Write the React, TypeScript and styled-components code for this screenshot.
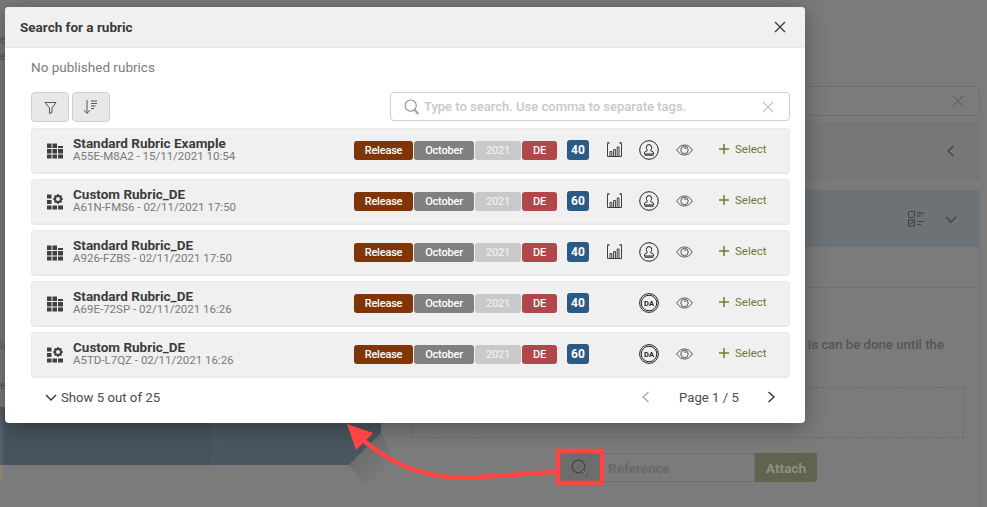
import React from "react";
import styled, { createGlobalStyle } from "styled-components";

const Global = createGlobalStyle`
  html, body { margin: 0; padding: 0; background: #7b7b7b; }
  * { box-sizing: border-box; }
  body { font-family: Roboto, "Noto Sans", "Liberation Sans", sans-serif; }
`;

const Page = styled.div`
  position: relative;
  width: 987px;
  height: 507px;
  overflow: hidden;
  background: #7b7b7b;
  display: flex;
`;

const LeftColumn = styled.div`
  width: 381px;
  flex: none;
  display: flex;
  flex-direction: column;
`;

const EdgeText = styled.div<{ $gap: number; $dark?: boolean }>`
  margin-top: ${(p) => p.$gap}px;
  height: 16px;
  font-size: 10px;
  line-height: 16px;
  flex: none;
  color: ${(p) => (p.$dark ? "#333" : "#585858")};
`;

const BandArea = styled.div`
  position: relative;
  margin-top: auto;
  height: 100px;
  flex: none;
  background:
    linear-gradient(180deg, #7d7b77 0, #7b7b7b 100%) 195px 58px / 50px 26px no-repeat,
    linear-gradient(180deg, #8a8372 0, #85806f 100%) 0 58px / 3px 16px no-repeat;

  &::before {
    content: "";
    position: absolute;
    left: 340px;
    top: 20px;
    width: 60px;
    height: 70px;
    background: linear-gradient(135deg, #636363 15%, #7b7b7b 68%);
    clip-path: polygon(41px 6px, 9px 38px, 32px 68px, 56px 34px);
  }
`;

const DarkBand = styled.div`
  position: relative;
  height: 58px;
  background: linear-gradient(90deg, #56646e 0, #47535c 1.5%, #47535c 55%, #4a5761 56%, #49565f 100%);
  clip-path: polygon(0 0, 100% 0, 100% 26px, 349px 100%, 0 100%);
`;

const RightColumn = styled.div`
  margin-left: 31px;
  width: 568px;
  flex: none;
  padding-top: 86px;
  display: flex;
  flex-direction: column;
`;

const GhostSearch = styled.div`
  height: 30px;
  border: 1px solid #6e6e6e;
  border-radius: 4px;
  display: flex;
  align-items: center;
  justify-content: flex-end;
  padding-right: 15px;
  color: #666;
`;

const GhostPanel = styled.div`
  margin-top: 6px;
  height: 58px;
  border: 1px solid #747474;
  border-radius: 4px;
  background: #777;
  display: flex;
  align-items: center;
  justify-content: flex-end;
  padding-right: 22px;
  color: #3f3f3f;
`;

const GhostCard = styled.div`
  margin-top: 10px;
  height: 317px;
  border-right: 1px solid #6a7680;
  display: flex;
  flex-direction: column;
`;

const GhostHead = styled.div`
  height: 57px;
  flex: none;
  background: #6c7275;
  border-radius: 4px 4px 0 0;
  display: flex;
  align-items: center;
  justify-content: flex-end;
  gap: 20px;
  padding-right: 22px;
  color: #3f3f3f;
`;

const GhostTabs = styled.div`
  height: 41px;
  flex: none;
  border-bottom: 1px solid #707070;
`;

const GhostText = styled.p`
  margin: 47px 35px 0 0;
  text-align: right;
  font-size: 13.2px;
  line-height: 20px;
  color: #555;
  font-weight: 500;
`;

const Dropzone = styled.div`
  margin: 32px 15px 0 0;
  height: 51px;
  border: 1px dashed #6a6a6a;
  flex: none;
`;

const AttachRow = styled.div`
  margin: 15px 0 0 147px;
  display: flex;
  height: 29px;
  font-size: 13.5px;
  font-weight: 700;
`;

const LookupButton = styled.div`
  width: 41px;
  background: #6c6c6c;
  display: flex;
  align-items: center;
  justify-content: center;
  color: #454545;
`;

const ReferenceField = styled.div`
  width: 155px;
  border: 1px solid #6e6e6e;
  border-left: 0;
  padding: 0 8px;
  display: flex;
  align-items: center;
  color: #686868;
`;

const AttachButton = styled.div`
  width: 62px;
  background: #5f634f;
  border-radius: 0 3px 3px 0;
  color: #8f917f;
  display: flex;
  align-items: center;
  justify-content: center;
`;

const Modal = styled.section`
  position: absolute;
  left: 5px;
  top: 7px;
  width: 800px;
  height: 416px;
  background: #fff;
  border-radius: 4px;
  box-shadow: 0 4px 22px rgba(0, 0, 0, 0.35);
  display: flex;
  flex-direction: column;
  color: #3c3c3c;
`;

const ModalHeader = styled.header`
  height: 41px;
  flex: none;
  background: #f0f0f0;
  border-bottom: 1px solid #e6e6e6;
  border-radius: 4px 4px 0 0;
  display: flex;
  align-items: center;
  justify-content: space-between;
  padding: 0 19px 0 15px;
`;

const ModalTitle = styled.h2`
  margin: 0;
  font-size: 13.5px;
  font-weight: 700;
  color: #3a3a3a;
`;

const ModalBody = styled.div`
  flex: 1;
  display: flex;
  flex-direction: column;
  padding: 0 15px 0 26px;
`;

const Notice = styled.div`
  height: 38px;
  display: flex;
  align-items: center;
  font-size: 13.5px;
  color: #7c7c7c;
`;

const Toolbar = styled.div`
  margin-top: 6px;
  height: 30px;
  display: flex;
  gap: 3px;
  align-items: flex-start;
`;

const ToolButton = styled.button`
  width: 38px;
  height: 30px;
  padding: 0;
  background: #e8e8e8;
  border: 1px solid #cfcfcf;
  border-radius: 4px;
  display: flex;
  align-items: center;
  justify-content: center;
  color: #555;
`;

const SearchBox = styled.div`
  margin-left: auto;
  width: 400px;
  height: 29px;
  border: 1px solid #cfcfcf;
  border-radius: 4px;
  display: flex;
  align-items: center;
  padding: 0 15px 0 13px;
  gap: 4px;
  color: #8a8a8a;
`;

const SearchClear = styled.span`
  display: flex;
  color: #c8c8c8;
`;

const Placeholder = styled.span`
  flex: 1;
  font-size: 13px;
  font-weight: 500;
  color: #c8c8c8;
`;

const RowList = styled.div`
  margin-top: 6px;
  display: flex;
  flex-direction: column;
  gap: 5px;
`;

const Row = styled.div`
  height: 46px;
  background: #f0f0f0;
  border: 1px solid #e9e9e9;
  border-bottom-width: 2px;
  border-radius: 4px;
  display: flex;
  align-items: center;
  padding-left: 15px;
`;

const RowIcon = styled.div`
  width: 26px;
  flex: none;
  display: flex;
  color: #3f3f3f;
`;

const RowText = styled.div`
  width: 281px;
  flex: none;
  display: flex;
  flex-direction: column;
  margin-top: -4px;
`;

const RowName = styled.div`
  font-size: 13.5px;
  line-height: 14px;
  font-weight: 700;
  color: #3c3c3c;
`;

const RowMeta = styled.div`
  font-size: 11.5px;
  line-height: 12px;
  color: #7a7a7a;
`;

const Tags = styled.div`
  display: flex;
  gap: 1px;
  flex: none;
  width: 203px;
  margin-top: -1px;
`;

const Tag = styled.span<{ $bg: string; $w: number; $fg?: string }>`
  width: ${(p) => p.$w}px;
  height: 19px;
  background: ${(p) => p.$bg};
  color: ${(p) => p.$fg || "#fff"};
  border-radius: 3px;
  font-size: 11px;
  letter-spacing: -0.2px;
  font-weight: 500;
  display: flex;
  align-items: center;
  justify-content: center;
`;

const Count = styled.span`
  margin-left: 10px;
  margin-top: -2px;
  width: 22px;
  height: 20px;
  flex: none;
  background: #2b5b84;
  color: #fff;
  border-radius: 3px;
  font-size: 12px;
  font-weight: 700;
  display: flex;
  align-items: center;
  justify-content: center;
`;

const StatSlot = styled.div`
  margin-left: 18px;
  width: 16px;
  flex: none;
  display: flex;
  color: #3f3f3f;
  margin-top: -3px;
`;

const StampSlot = styled.div`
  margin-left: 16px;
  width: 20px;
  flex: none;
  display: flex;
  color: #222;
  margin-top: -1px;
`;

const EyeSlot = styled.div`
  margin-left: 17px;
  width: 17px;
  flex: none;
  display: flex;
  color: #555;
  margin-top: -2px;
`;

const SelectAction = styled.div`
  margin-left: 26px;
  display: flex;
  align-items: center;
  gap: 6px;
  font-size: 11.5px;
  color: #6b7a3a;
  margin-top: -3px;
`;

const ModalFooter = styled.div`
  margin-top: 3px;
  height: 32px;
  display: flex;
  align-items: center;
  font-size: 13.2px;
  color: #4c4c4c;
  padding-left: 14px;
  padding-right: 13px;
`;

const ShowMore = styled.div`
  display: flex;
  align-items: center;
  gap: 4px;
`;

const Pager = styled.div`
  margin-left: auto;
  display: flex;
  align-items: center;
`;

const PageLabel = styled.span`
  width: 59px;
  margin: 0 27px;
  white-space: nowrap;
`;

const Overlay = styled.svg`
  position: absolute;
  left: 0;
  top: 0;
  pointer-events: none;
`;

const Magnifier = ({ size = 16 }: { size?: number }) => (
  <svg width={size} height={size} viewBox="0 0 18 18" fill="none" stroke="currentColor">
    <circle cx="7.5" cy="7.5" r="6.3" strokeWidth="1.2" />
    <path d="M11.8 12l3.6 4.2" strokeWidth="2.4" strokeLinecap="round" />
    <path d="M11.8 12l3.6 4.2" strokeWidth="1" stroke="#fff" strokeLinecap="round" opacity=".6" />
  </svg>
);

const CrossIcon = ({ size = 12 }: { size?: number }) => (
  <svg width={size} height={size} viewBox="0 0 12 12" fill="none" stroke="currentColor" strokeWidth="1.4">
    <path d="M1 1l10 10M11 1L1 11" />
  </svg>
);

const FilterIcon = () => (
  <svg width="13" height="13" viewBox="0 0 13 13" fill="none" stroke="currentColor" strokeWidth="1">
    <path d="M1 1.5h11L8 7v4.5L5.5 12.5V7z" strokeLinejoin="round" />
  </svg>
);

const SortIcon = () => (
  <svg width="16" height="16" viewBox="0 0 16 16" fill="none" stroke="currentColor" strokeWidth="1">
    <path d="M4 1v13M1 11l3 3.5L7 11" />
    <path d="M8 2h6M8 4.5h6M8 7h4.5M8 9.5h3" />
  </svg>
);

const GridIcon = () => (
  <svg width="16" height="16" viewBox="0 0 16 16" fill="currentColor">
    <rect x="0" y="0.5" width="4.5" height="4.5" />
    <rect x="5.5" y="0.5" width="4.5" height="4.5" />
    <rect x="11" y="3" width="5" height="2" />
    <rect x="0" y="6" width="4.5" height="4.5" />
    <rect x="5.5" y="6" width="4.5" height="4.5" />
    <rect x="11" y="6" width="5" height="4.5" />
    <rect x="0" y="11.5" width="4.5" height="4" />
    <rect x="5.5" y="11.5" width="4.5" height="4" />
    <rect x="11" y="11.5" width="5" height="4" />
  </svg>
);

const GearGridIcon = () => (
  <svg width="16" height="16" viewBox="0 0 16 16" fill="currentColor">
    <rect x="0" y="0.5" width="4.5" height="4" />
    <rect x="0" y="6" width="4.5" height="4" />
    <rect x="0" y="11.5" width="4.5" height="4" />
    <rect x="5.5" y="11.5" width="4.5" height="4" />
    <rect x="11" y="11.5" width="5" height="4" />
    <circle cx="11" cy="5" r="3" fill="none" stroke="currentColor" strokeWidth="2" />
    <path d="M11 0v2M11 8v2M6 5h2M14 5h2M7.5 1.5l1.4 1.4M13.1 7.1l1.4 1.4M14.5 1.5l-1.4 1.4M8.9 7.1l-1.4 1.4" stroke="currentColor" strokeWidth="1.5" />
  </svg>
);

const StatsIcon = () => (
  <svg width="15" height="15" viewBox="0 0 15 15" fill="none" stroke="currentColor" strokeWidth="1">
    <path d="M.5 2v12.5h14V2" />
    <path d="M3 14V9.5h1.800V14M6.600 14V7.500h1.800V14M10.200 14V5h1.800v9" />
    <path d="M0 1h2.500M12.500 1H15" strokeWidth="1.6" />
  </svg>
);

const StampIcon = () => (
  <svg width="20" height="20" viewBox="0 0 20 20" fill="none" stroke="currentColor" strokeWidth="1">
    <circle cx="10" cy="10" r="9.3" />
    <path d="M8.300 10.500c0-1-1-1.500-1-3.200a2.700 2.700 0 0 1 5.400 0c0 1.700-1 2.200-1 3.200 0 .9 2.800.6 2.800 2.300v1.200H5.500v-1.200c0-1.700 2.800-1.400 2.800-2.300z" />
    <path d="M5.500 15.200h9" />
  </svg>
);

const DaIcon = () => (
  <svg width="20" height="20" viewBox="0 0 20 20" fill="none" stroke="currentColor">
    <circle cx="10" cy="10" r="9.4" strokeWidth="1" />
    <circle cx="10" cy="10" r="7.8" strokeWidth="1" />
    <text x="10" y="12.6" textAnchor="middle" fontSize="7.5" fontWeight="700" fill="currentColor" stroke="none" fontFamily="Roboto, sans-serif">DA</text>
  </svg>
);

const EyeIcon = () => (
  <svg width="17" height="12" viewBox="0 0 17 12" fill="none" stroke="currentColor" strokeWidth="1">
    <path d="M.7 6C3 2.500 5.500 1 8.500 1s5.500 1.500 7.800 5c-2.300 3.500-4.800 5-7.800 5S3 9.500.7 6z" />
    <circle cx="8.5" cy="6" r="3.7" />
    <path d="M8 4.200c1.200-.5 2 0 2.300.8" />
  </svg>
);

const PlusIcon = () => (
  <svg width="10" height="10" viewBox="0 0 10 10" stroke="#6b7f2e" strokeWidth="1.5">
    <path d="M5 0v10M0 5h10" />
  </svg>
);

const Chevron = ({ dir, color = "#444", size = 12 }: { dir: "up" | "down" | "left" | "right"; color?: string; size?: number }) => {
  const d = { down: "M1 4l5 5 5-5", up: "M1 8l5-5 5 5", left: "M8.500 1L3 6l5.500 5", right: "M3.500 1L9 6l-5.500 5" }[dir];
  return (
    <svg width={size} height={size} viewBox="0 0 12 12" fill="none" stroke={color} strokeWidth="1.4">
      <path d={d} />
    </svg>
  );
};

const ChecklistIcon = () => (
  <svg width="17" height="16" viewBox="0 0 17 16" fill="none" stroke="currentColor" strokeWidth="1">
    <rect x=".5" y=".5" width="6" height="6" rx="1" />
    <rect x=".5" y="9" width="6" height="6" />
    <path d="M2 11.500l1.300 1.500L6 9.500M9 2h7M9 5h4M9 10.500h7M9 13.500h4" />
  </svg>
);

const rubrics = [
  { name: "Standard Rubric Example", meta: "A55E-M8A2 - 15/11/2021 10:54", count: 40, custom: false, stats: true, da: false },
  { name: "Custom Rubric_DE", meta: "A61N-FMS6 - 02/11/2021 17:50", count: 60, custom: true, stats: true, da: false },
  { name: "Standard Rubric_DE", meta: "A926-FZBS - 02/11/2021 17:50", count: 40, custom: false, stats: true, da: false },
  { name: "Standard Rubric_DE", meta: "A69E-72SP - 02/11/2021 16:26", count: 40, custom: false, stats: false, da: true },
  { name: "Custom Rubric_DE", meta: "A5TD-L7QZ - 02/11/2021 16:26", count: 60, custom: true, stats: false, da: true },
];

export default function App() {
  return (
    <Page>
      <Global />
      <LeftColumn>
        <EdgeText $gap={32}>e</EdgeText>
        <EdgeText $gap={1}>e</EdgeText>
        <EdgeText $gap={273}>is</EdgeText>
        <EdgeText $gap={24}>e</EdgeText>
        <BandArea>
          <DarkBand />
        </BandArea>
      </LeftColumn>
      <RightColumn>
        <GhostSearch>
          <CrossIcon />
        </GhostSearch>
        <GhostPanel>
          <Chevron dir="left" />
        </GhostPanel>
        <GhostCard>
          <GhostHead>
            <ChecklistIcon />
            <Chevron dir="down" />
          </GhostHead>
          <GhostTabs />
          <GhostText>is can be done until the</GhostText>
          <Dropzone />
          <AttachRow>
            <LookupButton>
              <Magnifier size={18} />
            </LookupButton>
            <ReferenceField>Reference</ReferenceField>
            <AttachButton>Attach</AttachButton>
          </AttachRow>
        </GhostCard>
      </RightColumn>

      <Modal>
        <ModalHeader>
          <ModalTitle>Search for a rubric</ModalTitle>
          <CrossIcon />
        </ModalHeader>
        <ModalBody>
          <Notice>No published rubrics</Notice>
          <Toolbar>
            <ToolButton>
              <FilterIcon />
            </ToolButton>
            <ToolButton>
              <SortIcon />
            </ToolButton>
            <SearchBox>
              <Magnifier />
              <Placeholder>Type to search. Use comma to separate tags.</Placeholder>
              <SearchClear>
                <CrossIcon />
              </SearchClear>
            </SearchBox>
          </Toolbar>
          <RowList>
            {rubrics.map((r) => (
              <Row key={r.meta}>
                <RowIcon>{r.custom ? <GearGridIcon /> : <GridIcon />}</RowIcon>
                <RowText>
                  <RowName>{r.name}</RowName>
                  <RowMeta>{r.meta}</RowMeta>
                </RowText>
                <Tags>
                  <Tag $bg="#7f3506" $w={59}>Release</Tag>
                  <Tag $bg="#808080" $w={60}>October</Tag>
                  <Tag $bg="#c9c9c9" $w={46} $fg="#eee">2021</Tag>
                  <Tag $bg="#b0474a" $w={35}>DE</Tag>
                </Tags>
                <Count>{r.count}</Count>
                <StatSlot>{r.stats && <StatsIcon />}</StatSlot>
                <StampSlot>{r.da ? <DaIcon /> : <StampIcon />}</StampSlot>
                <EyeSlot>
                  <EyeIcon />
                </EyeSlot>
                <SelectAction>
                  <PlusIcon />
                  Select
                </SelectAction>
              </Row>
            ))}
          </RowList>
          <ModalFooter>
            <ShowMore>
              <Chevron dir="down" color="#333" />
              Show 5 out of 25
            </ShowMore>
            <Pager>
              <Chevron dir="left" color="#aaa" />
              <PageLabel>Page 1 / 5</PageLabel>
              <Chevron dir="right" color="#333" />
            </Pager>
          </ModalFooter>
        </ModalBody>
      </Modal>

      <Overlay width="987" height="507" viewBox="0 0 987 507">
        <rect x="558" y="451" width="44" height="32" fill="none" stroke="#ff4444" strokeWidth="4.5" />
        <path d="M556 472C510 474 480 479 450 477C415 474 390 462 364 441" fill="none" stroke="#ff4444" strokeWidth="4.5" />
        <path d="M347 424L373 433L356 450Z" fill="#ff4444" />
      </Overlay>
    </Page>
  );
}
